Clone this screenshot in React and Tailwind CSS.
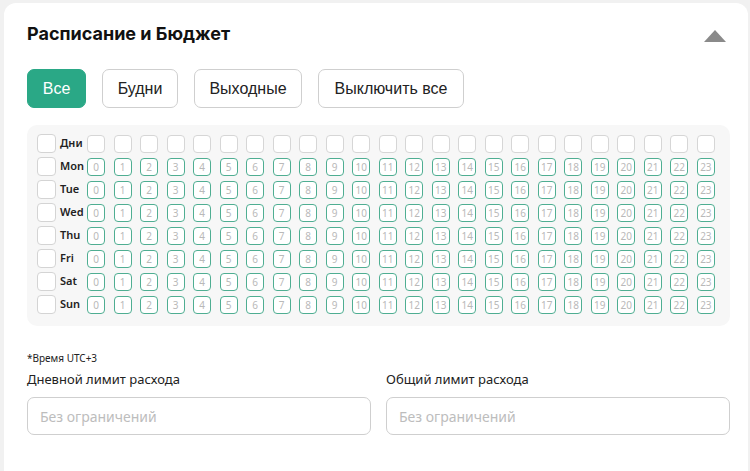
import React, { useState } from 'react';

const DAYS = ['Mon', 'Tue', 'Wed', 'Thu', 'Fri', 'Sat', 'Sun'];
const HOURS = Array.from({ length: 24 }, (_, i) => i);
const FILTERS = [
  { label: 'Все', w: 'w-[59px]' },
  { label: 'Будни', w: 'w-[76px]' },
  { label: 'Выходные', w: 'w-[108px]' },
  { label: 'Выключить все', w: 'w-[146px]' },
];

const Box = () => (
  <div className="w-[19px] h-[19px] rounded-[4px] border border-[#d4d4d4] bg-white shrink-0" />
);

const App = () => {
  const [active, setActive] = useState('Все');

  return (
    <div className="min-h-[471px] bg-[#f1f1f1] pl-[4px] pt-[3px] pr-[2px]">
      <div className="bg-white rounded-t-[12px] min-h-[468px] pl-[23px] pr-[18px] pt-[18px] font-['Noto_Sans',sans-serif]">
        <div className="flex items-center justify-between h-[24px]">
          <h2 className="font-['Inter',sans-serif] font-bold text-[18px] text-[#111]">
            Расписание и Бюджет
          </h2>
          <svg width="22" height="12" viewBox="0 0 22 12" className="mr-[4px] mt-[6px]">
            <polygon points="11,0 22,12 0,12" fill="#8a8a8a" />
          </svg>
        </div>

        <div className="flex gap-[16px] mt-[24px] font-['Liberation_Sans',sans-serif]">
          {FILTERS.map(f => (
            <button
              key={f.label}
              onClick={() => setActive(f.label)}
              className={`${f.w} h-[39px] rounded-[7px] text-[16px] ${
                active === f.label
                  ? 'bg-[#2aa886] text-white border border-[#2aa886]'
                  : 'bg-white text-[#222] border border-[#cfcfcf]'
              }`}
            >
              {f.label}
            </button>
          ))}
        </div>

        <div className="mt-[17px] w-[703px] bg-[#f7f7f7] rounded-[10px] pl-[10px] pr-[15px] pt-[9px] pb-[12px] flex flex-col gap-[4px]">
          <div className="flex items-center h-[19px]">
            <Box />
            <span className="w-[31px] pl-[4px] text-[11px] font-semibold text-[#222]">Дни</span>
            <div className="flex-1 flex justify-between">
              {HOURS.map(h => (
                <div key={h} className="w-[18px] h-[18px] rounded-[4px] border border-[#d6d6d6] bg-white" />
              ))}
            </div>
          </div>
          {DAYS.map(d => (
            <div key={d} className="flex items-center h-[19px]">
              <Box />
              <span className="w-[31px] pl-[4px] text-[11px] font-semibold text-[#222]">{d}</span>
              <div className="flex-1 flex justify-between">
                {HOURS.map(h => (
                  <div
                    key={h}
                    className="w-[18px] h-[18px] rounded-[4px] border border-[#4fae92] bg-white flex items-center justify-center text-[10px] text-[#b9b9b9] leading-none"
                  >
                    {h}
                  </div>
                ))}
              </div>
            </div>
          ))}
        </div>

        <div className="mt-[25px] text-[10px] text-[#222]">*Время UTC+3</div>

        <div className="grid grid-cols-2 gap-[15px] w-[703px] mt-[4px]">
          {['Дневной лимит расхода', 'Общий лимит расхода'].map(label => (
            <div key={label}>
              <div className="text-[13px] text-[#222] leading-[18px]">{label}</div>
              <input
                placeholder="Без ограничений"
                className="mt-[9px] w-full h-[38px] rounded-[7px] border border-[#cfcfcf] px-[12px] text-[14px] placeholder:text-[#bdbdbd] outline-none"
              />
            </div>
          ))}
        </div>
      </div>
    </div>
  );
};

export default App;
